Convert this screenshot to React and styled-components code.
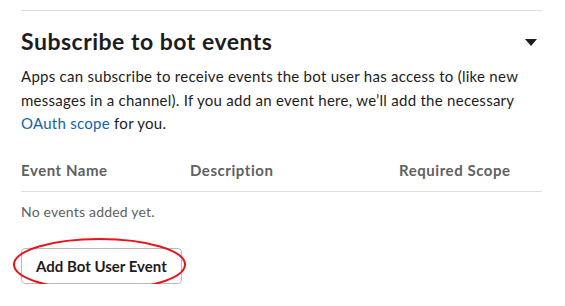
import React from 'react';
import styled, { createGlobalStyle } from 'styled-components';

const GlobalStyle = createGlobalStyle`
  body {
    margin: 0;
    background: #ffffff;
    font-family: Lato, "Noto Sans", sans-serif;
    color: #1d1c1d;
  }
`

const Section = styled.section`
  width: 521px;
  padding: 10px 0 0 21px;
`

const Divider = styled.div`
  height: 1px;
  background-color: #dddddd;
`

const Header = styled.div`
  margin-top: 16px;
  display: flex;
  align-items: center;
  justify-content: space-between;
`

const Title = styled.h2`
  margin: 0;
  font-size: 23px;
  line-height: 28px;
  font-weight: 700;
  letter-spacing: 0.5px;
  color: #1d1c1d;
`

const Caret = styled.span`
  width: 0;
  height: 0;
  margin: 3px 5px 0 0;
  border-left: 6.5px solid transparent;
  border-right: 6.5px solid transparent;
  border-top: 7px solid #1d1c1d;
`

const Description = styled.p`
  margin: 10px 0 0;
  font-size: 15px;
  line-height: 23.5px;
  letter-spacing: 0.27px;
  color: #1d1c1d;
  a {
    color: #1264a3;
    text-decoration: none;
  }
`

const Table = styled.div`
  margin-top: 24px;
`

const HeadRow = styled.div`
  display: grid;
  grid-template-columns: 169px 209px 1fr;
  padding-bottom: 11px;
  border-bottom: 1px solid #dddddd;
`

const HeadCell = styled.div`
  font-size: 15px;
  line-height: 20px;
  font-weight: 700;
  letter-spacing: 0.55px;
  color: #616061;
`

const Empty = styled.div`
  padding-top: 10px;
  font-size: 14px;
  line-height: 20px;
  letter-spacing: 0.2px;
  color: #616061;
`

const ButtonWrap = styled.div`
  position: relative;
  display: inline-block;
  margin-top: 26px;
`

const Button = styled.button`
  height: 36px;
  padding: 0 14px;
  border: 1px solid #bbbbbb;
  border-radius: 4px;
  background: #ffffff;
  font-family: Lato, "Noto Sans", sans-serif;
  font-size: 15px;
  font-weight: 700;
  color: #1d1c1d;
  cursor: pointer;
`

const Ring = styled.svg`
  position: absolute;
  left: -9px;
  top: -11px;
  pointer-events: none;
  overflow: visible;
`

const App = () => {
    return (
        <>
            <GlobalStyle />
            <Section>
                <Divider />
                <Header>
                    <Title>Subscribe to bot events</Title>
                    <Caret />
                </Header>
                <Description>
                    Apps can subscribe to receive events the bot user has access to (like new
                    messages in a channel). If you add an event here, we’ll add the necessary{' '}
                    <a href='#'>OAuth scope</a> for you.
                </Description>
                <Table>
                    <HeadRow>
                        <HeadCell>Event Name</HeadCell>
                        <HeadCell>Description</HeadCell>
                        <HeadCell>Required Scope</HeadCell>
                    </HeadRow>
                    <Empty>No events added yet.</Empty>
                </Table>
                <ButtonWrap>
                    <Button>Add Bot User Event</Button>
                    <Ring width='175' height='55' viewBox='0 0 175 55'>
                        <ellipse cx='87.5' cy='27.5' rx='85.5' ry='25.5' fill='none' stroke='#e8141c' strokeWidth='2' />
                    </Ring>
                </ButtonWrap>
            </Section>
        </>
    );
}

export default App;
